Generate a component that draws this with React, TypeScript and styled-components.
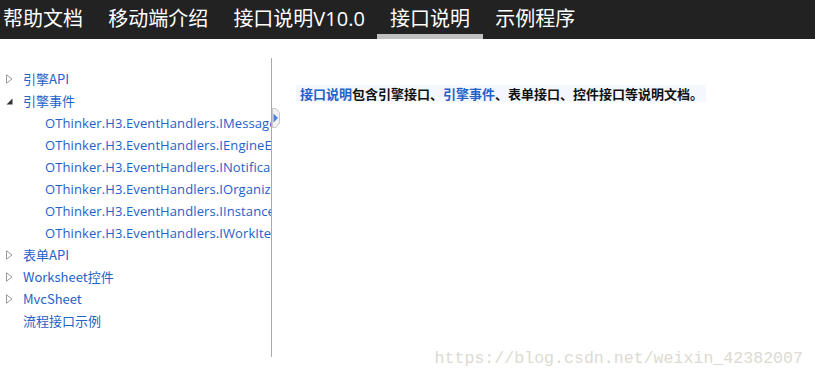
import React from "react"
import styled, { createGlobalStyle } from "styled-components"

const GlobalStyle = createGlobalStyle`
  html, body {
    margin: 0;
    padding: 0;
    background: #fff;
  }
  body {
    font-family: "Noto Sans CJK SC", "Open Sans", sans-serif;
  }
`

const Page = styled.div`
  position: relative;
  width: 815px;
  height: 377px;
  overflow: hidden;
`

const NavBar = styled.div`
  display: flex;
  flex-direction: row;
  height: 39px;
  background: #222222;
  box-sizing: border-box;
`

const NavItem = styled.div<{ active?: boolean }>`
  display: flex;
  align-items: center;
  height: 39px;
  box-sizing: border-box;
  padding: 0 12.6px 5px 12.6px;
  color: #ffffff;
  font-family: "Open Sans", "Noto Sans CJK SC", sans-serif;
  font-size: 20px;
  white-space: nowrap;
  ${p => (p.active ? "border-bottom: 5px solid #c0c0c0; padding-bottom: 0;" : "")}
  &:first-child {
    padding-left: 3px;
  }
`

const Main = styled.div`
  display: flex;
  flex-direction: row;
  margin-top: 19px;
`

const TreePanel = styled.div`
  position: relative;
  width: 272px;
  height: 299px;
  box-sizing: border-box;
  padding-top: 10px;
  border-right: 1px solid #a9a9a9;
`

const TreeList = styled.div`
  width: 271px;
  overflow: hidden;
`

const TreeRow = styled.div<{ level?: number }>`
  display: flex;
  align-items: center;
  height: 22px;
  padding-left: ${p => (p.level ? 45 : 6)}px;
  white-space: nowrap;
  font-size: 13px;
  color: #2461c9;
  font-family: "Open Sans", "Noto Sans CJK SC", sans-serif;
`

const Toggle = styled.span`
  display: inline-flex;
  width: 17px;
  height: 22px;
  align-items: center;
  flex-shrink: 0;
`

const RowLabel = styled.span`
  font-family: "Noto Sans CJK SC", "Open Sans", sans-serif;
  line-height: 22px;
`

const SubLabel = styled.span`
  font-family: "Open Sans", "Noto Sans", sans-serif;
  letter-spacing: 0.1px;
`

const Splitter = styled.div`
  position: absolute;
  right: -9px;
  top: 50px;
  width: 8px;
  height: 20px;
`

const Content = styled.div`
  flex: 1;
  padding: 22px 0 0 24px;
`

const Intro = styled.div`
  display: inline-block;
  background: #f4f7fe;
  padding: 0 3px 0 4px;
  line-height: 17px;
  font-size: 13px;
  font-weight: bold;
  color: #111;
  white-space: nowrap;
`

const LinkText = styled.span`
  color: #2461c9;
`

const Watermark = styled.div`
  position: absolute;
  right: 12px;
  bottom: 9px;
  font-family: "Liberation Mono", monospace;
  font-size: 16.6px;
  color: #dcdad2;
  white-space: nowrap;
`

const Collapsed = () => (
  <svg width="7" height="10" viewBox="0 0 7 10">
    <path d="M0.5 0.8 L6 5 L0.5 9.2 Z" fill="none" stroke="#9a9a9a" strokeWidth="1" />
  </svg>
)

const Expanded = () => (
  <svg width="7" height="7" viewBox="0 0 7 7">
    <path d="M6.5 0.5 L6.5 6.5 L0.5 6.5 Z" fill="#333" />
  </svg>
)

const navs = ["帮助文档", "移动端介绍", "接口说明V10.0", "接口说明", "示例程序"]

const handlers = [
  "OThinker.H3.EventHandlers.IMessageHandler",
  "OThinker.H3.EventHandlers.IEngineEventHandler",
  "OThinker.H3.EventHandlers.INotificationHandler",
  "OThinker.H3.EventHandlers.IOrganizationHandler",
  "OThinker.H3.EventHandlers.IInstanceHandler",
  "OThinker.H3.EventHandlers.IWorkItemHandler",
]

const App: React.FC = () => {
  return (
    <Page>
      <GlobalStyle />
      <NavBar>
        {navs.map((n, i) => (
          <NavItem key={i} active={i === 3}>
            {n}
          </NavItem>
        ))}
      </NavBar>
      <Main>
        <TreePanel>
          <TreeList>
            <TreeRow>
              <Toggle>
                <Collapsed />
              </Toggle>
              <RowLabel>引擎API</RowLabel>
            </TreeRow>
            <TreeRow>
              <Toggle>
                <Expanded />
              </Toggle>
              <RowLabel>引擎事件</RowLabel>
            </TreeRow>
            {handlers.map(h => (
              <TreeRow level={1} key={h}>
                <SubLabel>{h}</SubLabel>
              </TreeRow>
            ))}
            <TreeRow>
              <Toggle>
                <Collapsed />
              </Toggle>
              <RowLabel>表单API</RowLabel>
            </TreeRow>
            <TreeRow>
              <Toggle>
                <Collapsed />
              </Toggle>
              <RowLabel>Worksheet控件</RowLabel>
            </TreeRow>
            <TreeRow>
              <Toggle>
                <Collapsed />
              </Toggle>
              <RowLabel>MvcSheet</RowLabel>
            </TreeRow>
            <TreeRow>
              <Toggle />
              <RowLabel>流程接口示例</RowLabel>
            </TreeRow>
          </TreeList>
          <Splitter>
            <svg width="8" height="20" viewBox="0 0 8 20">
              <path d="M0.5 0.5 L4 0.5 L7.5 5 L7.5 15 L4 19.5 L0.5 19.5 Z" fill="#f2f2f2" stroke="#c8c8c8" />
              <path d="M1.5 5.5 L6 10 L1.5 14.5 Z" fill="#4f7fe0" />
            </svg>
          </Splitter>
        </TreePanel>
        <Content>
          <Intro>
            <LinkText>接口说明</LinkText>包含引擎接口、<LinkText>引擎事件</LinkText>、表单接口、控件接口等说明文档。
          </Intro>
        </Content>
      </Main>
      <Watermark>https://blog.csdn.net/weixin_42382007</Watermark>
    </Page>
  )
}

export default App
